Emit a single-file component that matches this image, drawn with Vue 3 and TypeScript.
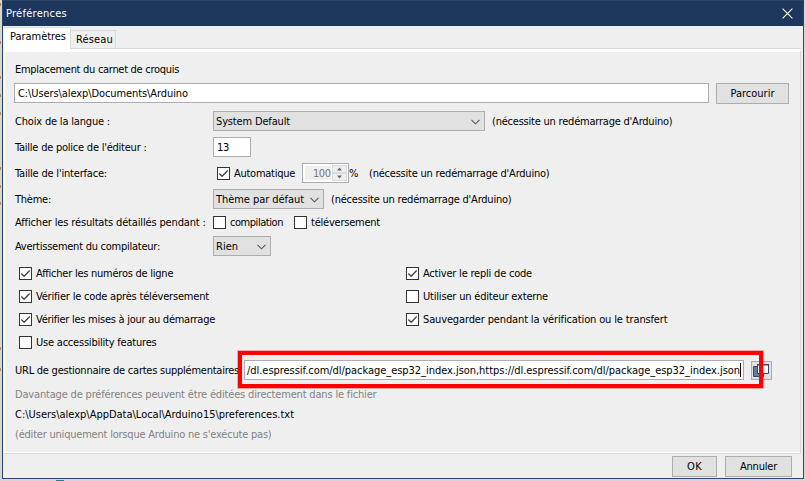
<script setup lang="ts">
import { ref } from 'vue'

interface Option {
  label: string
  checked: boolean
  width: number
}

// Spreads the letters of an element so that its text takes the given width in pixels.
const vFit = {
  mounted(el: HTMLElement, binding: { value: number }) {
    const range = document.createRange()
    range.selectNodeContents(el)
    const natural = range.getBoundingClientRect().width
    const count = (el.textContent ?? '').length
    if (count > 0) el.style.letterSpacing = `${(binding.value - natural) / count}px`
  },
}

const restart = "(nécessite un redémarrage d'Arduino)"
const boardsUrl =
  '/dl.espressif.com/dl/package_esp32_index.json,https://dl.espressif.com/dl/package_esp32_index.json'

const options = ref<Option[]>([
  { label: 'Afficher les numéros de ligne', checked: true, width: 137.5 },
  { label: 'Activer le repli de code', checked: true, width: 109 },
  { label: 'Vérifier le code après téléversement', checked: true, width: 173 },
  { label: 'Utiliser un éditeur externe', checked: false, width: 125 },
  { label: 'Vérifier les mises à jour au démarrage', checked: true, width: 179 },
  { label: 'Sauvegarder pendant la vérification ou le transfert', checked: true, width: 244.5 },
  { label: 'Use accessibility features', checked: false, width: 120.5 },
])

const specks = [3, 41, 76, 94, 112, 167, 185, 202, 347, 368]
</script>

<template>
  <div class="desktop">
    <i v-for="y in specks" :key="y" class="speck" :style="{ top: y + 'px' }"></i>
    <i class="teal"></i>
    <div class="window">
      <header class="titlebar">
        <span v-fit="61">Préférences</span>
        <svg class="close" width="11" height="11" viewBox="0 0 11 11">
          <path d="M.6.6l9.8 9.8M10.4.6L.6 10.4" />
        </svg>
      </header>

      <nav class="tabs">
        <div class="tab active"><span v-fit="56">Paramètres</span></div>
        <div class="tab"><span v-fit="37">Réseau</span></div>
        <div class="rest"></div>
      </nav>

      <main class="pane">
        <div class="line first"><span v-fit="164">Emplacement du carnet de croquis</span></div>
        <div class="row folder">
          <div class="field grow"><span v-fit="170">C:\Users\alexp\Documents\Arduino</span></div>
          <div class="button browse"><span v-fit="44">Parcourir</span></div>
        </div>

        <div class="row">
          <div class="label"><span v-fit="95">Choix de la langue :</span></div>
          <div class="select wide">
            <span v-fit="74">System Default</span>
            <svg class="chevron" width="9" height="6" viewBox="0 0 9 6"><path d="M.5.8l4 4 4-4" /></svg>
          </div>
          <span v-fit="180.500" class="hint">{{ restart }}</span>
        </div>

        <div class="row">
          <div class="label"><span v-fit="131.500">Taille de police de l'éditeur :</span></div>
          <div class="field size"><span v-fit="12">13</span></div>
        </div>

        <div class="row">
          <div class="label"><span v-fit="92">Taille de l'interface:</span></div>
          <div class="check auto">
            <svg class="box" width="13" height="13" viewBox="0 0 13 13">
              <rect x=".5" y=".5" width="12" height="12" /><path d="M2.3 6.5l2.8 2.8 5.6-5.8" />
            </svg>
            <span v-fit="61">Automatique</span>
          </div>
          <div class="spinner">
            <div class="value"><span v-fit="17.500">100</span></div>
            <div class="arrows">
              <svg width="15" height="8" viewBox="0 0 15 8"><path d="M5 5.5L7.5 2.5 10 5.5z" /></svg>
              <svg width="15" height="8" viewBox="0 0 15 8"><path d="M5 2.5L7.5 5.5 10 2.5z" /></svg>
            </div>
          </div>
          <span class="percent">%</span>
          <span v-fit="180.500">{{ restart }}</span>
        </div>

        <div class="row">
          <div class="label"><span v-fit="36">Thème:</span></div>
          <div class="select theme">
            <span v-fit="88">Thème par défaut</span>
            <svg class="chevron" width="9" height="6" viewBox="0 0 9 6"><path d="M.5.8l4 4 4-4" /></svg>
          </div>
          <span v-fit="180.500" class="hint">{{ restart }}</span>
        </div>

        <div class="row verbose">
          <div class="label"><span v-fit="191">Afficher les résultats détaillés pendant :</span></div>
          <div class="check compile">
            <svg class="box" width="13" height="13" viewBox="0 0 13 13"><rect x=".5" y=".5" width="12" height="12" /></svg>
            <span v-fit="53">compilation</span>
          </div>
          <div class="check">
            <svg class="box" width="13" height="13" viewBox="0 0 13 13"><rect x=".5" y=".5" width="12" height="12" /></svg>
            <span v-fit="69">téléversement</span>
          </div>
        </div>

        <div class="row">
          <div class="label"><span v-fit="145">Avertissement du compilateur:</span></div>
          <div class="select level">
            <span v-fit="22">Rien</span>
            <svg class="chevron" width="9" height="6" viewBox="0 0 9 6"><path d="M.5.8l4 4 4-4" /></svg>
          </div>
        </div>

        <div class="options">
          <div v-for="o in options" :key="o.label" class="check">
            <svg class="box" width="13" height="13" viewBox="0 0 13 13">
              <rect x=".5" y=".5" width="12" height="12" />
              <path v-if="o.checked" d="M2.3 6.5l2.8 2.8 5.6-5.8" />
            </svg>
            <span v-fit="o.width">{{ o.label }}</span>
          </div>
        </div>

        <div class="row">
          <div class="url-label"><span v-fit="224">URL de gestionnaire de cartes supplémentaires</span></div>
          <div class="field url"><span v-fit="493">{{ boardsUrl }}</span><i class="caret"></i></div>
          <div class="button open">
            <svg width="17" height="15" viewBox="0 0 17 15">
              <path class="back" d="M.5 3.5h10v10H.5z" />
              <path class="front" d="M4.5 1.5h11v9h-11z" />
              <path class="bar" d="M4 1h12v1.500H4z" />
            </svg>
          </div>
          <div class="highlight"></div>
        </div>

        <div class="line muted"><span v-fit="361.500">Davantage de préférences peuvent être éditées directement dans le fichier</span></div>
        <div class="line"><span v-fit="279">C:\Users\alexp\AppData\Local\Arduino15\preferences.txt</span></div>
        <div class="line muted"><span v-fit="256.500">(éditer uniquement lorsque Arduino ne s'exécute pas)</span></div>
      </main>

      <footer class="actions">
        <div class="button ok"><span v-fit="15">OK</span></div>
        <div class="button cancel"><span v-fit="37">Annuler</span></div>
      </footer>
    </div>
  </div>
</template>

<style>
body {
  margin: 0;
  overflow: hidden;
}
</style>

<style scoped>
* {
  box-sizing: border-box;
}

.desktop {
  position: relative;
  width: 806px;
  height: 481px;
  padding: 0 2px 2px;
  overflow: hidden;
  background: #d6d6d6;
  color: #000;
  font: 11px/16px 'DejaVu Sans Condensed', 'Noto Sans', sans-serif;
  white-space: nowrap;
}

.speck {
  position: absolute;
  left: 0;
  width: 1px;
  height: 3px;
  background: #b08a68;
}

.teal {
  position: absolute;
  left: 56px;
  bottom: 0;
  width: 8px;
  height: 1px;
  background: #168489;
}

.window {
  display: flex;
  flex-direction: column;
  height: 479px;
  border: 1px solid #2b466b;
  border-top: 0;
  background: #efefef;
}

.titlebar {
  display: flex;
  align-items: center;
  justify-content: space-between;
  height: 26px;
  padding: 0 10px 0 3px;
  border-top: 1px solid #2b466b;
  background: #1d365b;
  color: #fff;
}

.close {
  fill: none;
  stroke: #fff;
  stroke-width: 1.1;
}

.tabs {
  display: flex;
  align-items: flex-end;
  height: 22px;
  margin: 1px 2px 0 1px;
}

.tab {
  height: 19px;
  width: 45px;
  padding: 1px 0 0 5px;
  border: 1px solid #d9d9d9;
  border-left: 0;
}

.tab.active {
  height: 22px;
  width: 67px;
  padding-left: 6px;
  border-bottom: 0;
  background: #fff;
}

.rest {
  flex: 1;
  border-bottom: 1px solid #d9d9d9;
}

.pane {
  height: 405px;
  margin: 0 2px 0 1px;
  padding: 10px 11px 0 9px;
  border: 1px solid #d9d9d9;
  border-top: 3px solid #fff;
  border-left-color: #fff;
  box-shadow: inset 0 -1px #fff;
}

.line {
  height: 16px;
  margin-bottom: 4px;
  padding: 1px 0 0 1px;
}

.line.first {
  margin-bottom: 5px;
  padding-top: 0;
}

.row {
  position: relative;
  display: flex;
  align-items: center;
  height: 20px;
  margin-bottom: 6px;
}

.row span {
  padding-top: 2px;
}

.row.folder {
  height: 21px;
  align-items: flex-start;
  margin-bottom: 7px;
}

.field {
  display: flex;
  align-items: center;
  height: 20px;
  padding: 0 3px;
  border: 1px solid #abadb3;
  background: #fff;
}

.grow {
  width: 695px;
}

.button {
  display: flex;
  align-items: center;
  justify-content: center;
  height: 21px;
  border: 1px solid #adadad;
  background: #e1e1e1;
}

.row .browse span {
  padding-top: 0;
}

.browse {
  width: 73px;
  margin-left: 7px;
}

.label {
  display: flex;
  width: 199px;
  padding-left: 1px;
}

.select {
  display: flex;
  align-items: center;
  justify-content: space-between;
  height: 20px;
  padding: 0 4px 0 2px;
  border: 1px solid #adadad;
  background: #e1e1e1;
}

.wide {
  width: 272px;
}

.theme {
  width: 111px;
}

.level {
  width: 58px;
}

.chevron {
  margin-top: 2px;
  fill: none;
  stroke: #555;
  stroke-width: 1.1;
}

.hint {
  margin-left: 7px;
}

.size {
  width: 38px;
}

.check {
  display: flex;
  align-items: center;
  gap: 4px;
}

.box {
  fill: none;
  stroke: #333;
}

.box rect {
  fill: #fff;
}

.box path {
  stroke: #444;
  stroke-width: 1.3;
}

.auto {
  width: 85px;
  padding-left: 4px;
}

.spinner {
  display: flex;
  margin-left: 4px;
  width: 47px;
  height: 20px;
  padding: 1px;
  border: 1px solid #abadb3;
  background: #fff;
}

.value {
  width: 28px;
  margin: 1px;
  padding-left: 8px;
  background: #efefef;
  color: #777;
  line-height: 16px;
}

.arrows {
  display: flex;
  flex-direction: column;
  width: 15px;
}

.arrows svg {
  background: #efefef;
  outline: 1px solid #d9d9d9;
  outline-offset: -1px;
}

.arrows path {
  fill: #666;
}

.percent {
  width: 20px;
}

.row.verbose {
  height: 19px;
  margin: -2px 0 4px;
}

.row.verbose span {
  padding-top: 0;
}

.compile {
  width: 81px;
}

.options {
  display: grid;
  grid-template-columns: 387px auto;
  grid-auto-rows: 23px;
  margin-bottom: 6px;
  padding-left: 5px;
}

.url-label {
  display: flex;
  width: 230px;
  padding-left: 1px;
}

.url {
  width: 500px;
  padding: 0 0 0 2px;
}

.caret {
  width: 1px;
  height: 14px;
  background: #000;
}

.open {
  width: 21px;
  height: 19px;
  margin-left: 7px;
}

.open .back {
  fill: #5f7ba6;
  stroke: #324a73;
}

.open .front {
  fill: #fff;
  stroke: #324a73;
}

.open .bar {
  fill: #324a73;
}

.highlight {
  position: absolute;
  left: 224px;
  top: -9px;
  width: 525px;
  height: 37px;
  border: 4px solid #fe0000;
  outline: 1px solid rgba(255, 0, 0, 0.3);
}

.muted {
  color: #828282;
}

.actions {
  display: flex;
  justify-content: flex-end;
  gap: 8px;
  padding: 2px 11px 0 0;
}

.ok {
  width: 45px;
}

.cancel {
  width: 67px;
}
</style>
